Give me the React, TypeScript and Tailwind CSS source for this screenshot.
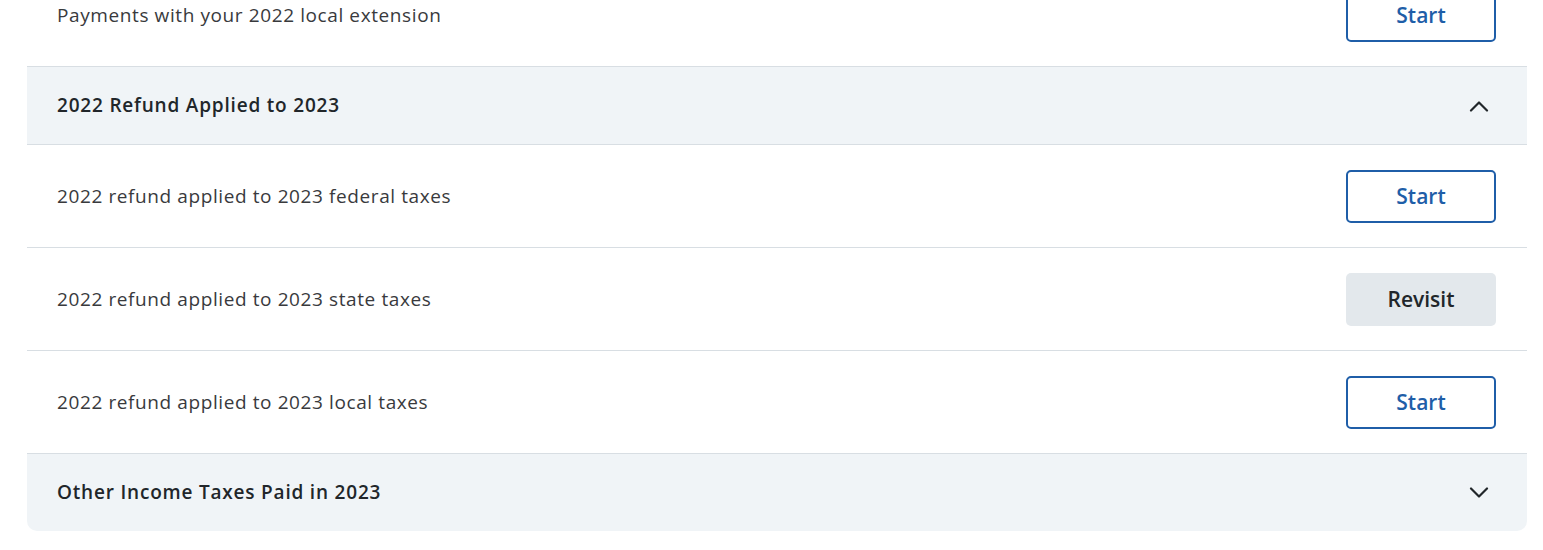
type Item = { label: string; action: "start" | "revisit" };

const refundItems: Item[] = [
  { label: "2022 refund applied to 2023 federal taxes", action: "start" },
  { label: "2022 refund applied to 2023 state taxes", action: "revisit" },
  { label: "2022 refund applied to 2023 local taxes", action: "start" },
];

function Chevron({ up }: { up: boolean }) {
  return (
    <svg width="20" height="12" viewBox="0 0 20 12" fill="none" className="text-[#21262a]">
      <path
        d={up ? "M2 10.5 L10 2.5 L18 10.5" : "M2 1.5 L10 9.5 L18 1.5"}
        stroke="currentColor"
        strokeWidth="2.2"
        strokeLinecap="round"
        strokeLinejoin="round"
      />
    </svg>
  );
}

function ActionButton({ action }: { action: Item["action"] }) {
  if (action === "revisit") {
    return (
      <button className="w-[150px] h-[53px] pt-[2px] rounded-[5px] bg-[#e3e8ec] text-[#21262a] text-[21px] font-semibold">
        Revisit
      </button>
    );
  }
  return (
    <button className="w-[150px] h-[53px] pt-[2px] rounded-[5px] border-2 border-[#1f5ea8] bg-white text-[#1f5ea8] text-[21px] font-semibold">
      Start
    </button>
  );
}

function Row({ item }: { item: Item }) {
  return (
    <div className="flex items-center justify-between h-[103px] pl-[30px] pr-[31px] border-b border-[#d8dee3]">
      <span className="text-[19px] tracking-[0.6px] text-[#393a3d]">{item.label}</span>
      <ActionButton action={item.action} />
    </div>
  );
}

function SectionHeader({ title, open }: { title: string; open: boolean }) {
  return (
    <div className="flex items-center justify-between h-[77px] pl-[30px] pr-[38px] bg-[#f0f4f7]">
      <span className="text-[19px] tracking-[0.8px] font-semibold text-[#21262a]">{title}</span>
      <Chevron up={open} />
    </div>
  );
}

export default function App() {
  return (
    <div className="bg-white h-[550px] overflow-hidden font-['Open_Sans',sans-serif]">
      <div className="ml-[27px] w-[1500px] -mt-[36px]">
        <Row item={{ label: "Payments with your 2022 local extension", action: "start" }} />
        <div className="border-b border-[#d8dee3]">
          <SectionHeader title="2022 Refund Applied to 2023" open />
        </div>
        {refundItems.map((item) => (
          <Row key={item.label} item={item} />
        ))}
        <div className="rounded-b-[10px] overflow-hidden">
          <SectionHeader title="Other Income Taxes Paid in 2023" open={false} />
        </div>
      </div>
    </div>
  );
}
